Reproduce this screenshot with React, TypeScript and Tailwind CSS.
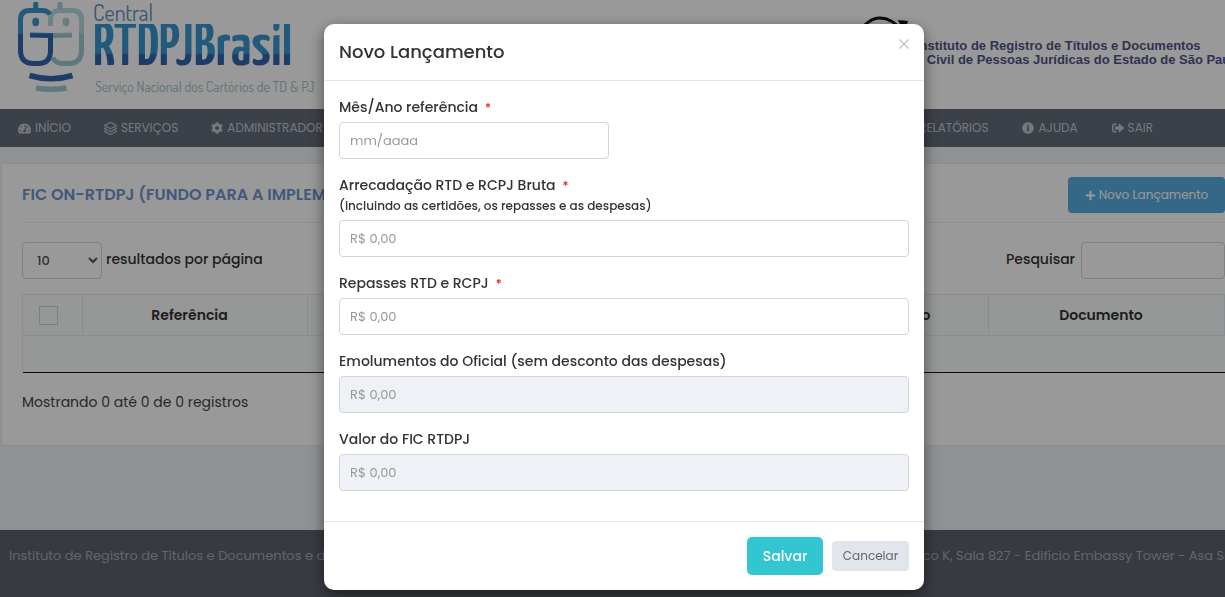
import type { ReactNode } from "react";
import { FaTachometerAlt, FaCog, FaInfoCircle, FaSignOutAlt, FaPlus, FaChartBar } from "react-icons/fa";
import { SlLayers } from "react-icons/sl";

function CentralLogo() {
  return (
    <svg viewBox="0 0 70 94" className="h-[94px] w-[70px] shrink-0" fill="none" aria-hidden="true">
      <defs>
        <linearGradient id="tone" gradientUnits="userSpaceOnUse" x1="0" y1="0" x2="0" y2="66">
          <stop offset="0.49" stopColor="#3a97d0" />
          <stop offset="0.53" stopColor="#2f65b0" />
        </linearGradient>
        <linearGradient id="pale" gradientUnits="userSpaceOnUse" x1="0" y1="0" x2="0" y2="66">
          <stop offset="0.49" stopColor="#b4dae2" />
          <stop offset="0.53" stopColor="#9fc8d1" />
        </linearGradient>
      </defs>
      <g stroke="url(#pale)" strokeWidth="5">
        <path d="M34.500 26v-6q0-9.500 9-9.500h13q9 0 9 9.500v30q0 13.500-13 13.500h-5q-8 0-11-6" />
        <path d="M37 35.500L56 35" />
      </g>
      <g stroke="url(#tone)" strokeWidth="5">
        <path d="M34 14.500q-2.500-4-8-4H13.500q-9 0-9 9.500v30q0 13.500 13 13.500h5q12 0 12-13.500V35.500L14 35" />
      </g>
      <rect x="17.200" y="2" width="5" height="8" rx="1" fill="#3a97d0" />
      <rect x="41.500" y="2" width="5" height="8" rx="1" fill="#a8d0da" />
      <ellipse cx="19.700" cy="22" rx="3.400" ry="4.200" fill="#3a97d0" />
      <ellipse cx="50" cy="22" rx="3.400" ry="4.200" fill="#a8d0da" />
      <path d="M13.500 75.500q21.500 6.500 43 0" stroke="#2f65b0" strokeWidth="5.500" />
      <path d="M20 88q15 2.500 30.500 0" stroke="#9fc8d1" strokeWidth="5.500" />
    </svg>
  );
}

function InstituteLogo() {
  return (
    <svg viewBox="0 0 60 60" className="h-[60px] w-[60px] shrink-0" fill="none" aria-hidden="true">
      <path d="M2 22Q12 6 24 6t22 13" stroke="#111" strokeWidth="3" />
      <path d="M42 8l10 1-4 12z" fill="#111" />
      <path d="M46 40Q36 55 24 55T4 42" stroke="#111" strokeWidth="3" />
    </svg>
  );
}

function NavItem({ icon, children }: { icon: ReactNode; children: ReactNode }) {
  return (
    <a href="#" className="flex items-center gap-1 whitespace-nowrap text-[12px] text-[#c4cacf]">
      {icon}
      {children}
    </a>
  );
}

type FieldProps = {
  id: string;
  label: string;
  hint?: string;
  placeholder: string;
  required?: boolean;
  disabled?: boolean;
  short?: boolean;
};

function Field({ id, label, hint, placeholder, required, disabled, short }: FieldProps) {
  return (
    <div className="mb-[15px]">
      <label htmlFor={id} className="mb-1 block pt-px text-[14px] leading-[21px] font-medium text-[#333]">
        {label}
        {required && <span className="ml-[7px] text-[12px] text-[#e02222]">*</span>}
        {hint && <span className="block text-[12px] leading-5">{hint}</span>}
      </label>
      <input
        id={id}
        type="text"
        placeholder={placeholder}
        disabled={disabled}
        className={
          "block h-[37px] rounded border border-[#d5d5d5] px-[10px] text-[13px] placeholder:text-[#999] " +
          (short ? "w-[270px] max-w-full " : "w-full ") +
          (disabled ? "bg-[#eef1f5]" : "bg-white")
        }
      />
    </div>
  );
}

const columns = [
  { name: "Referência", width: "w-[225px]" },
  { name: "Valor", width: "" },
  { name: "Situação", width: "" },
  { name: "Data Pagamento", width: "" },
  { name: "Documento", width: "w-[236px]" },
];

export default function App() {
  return (
    <div className="flex min-h-screen flex-col overflow-hidden bg-[#f0f2f7] font-['Poppins','Inter',sans-serif] text-[14px] text-[#333]">
      <header className="flex h-[109px] items-start justify-between bg-white pl-4">
        <div className="flex">
          <CentralLogo />
          <div className="pl-[7px] font-['Dosis','Liberation_Sans_Narrow',sans-serif] whitespace-nowrap">
            <div className="h-6 text-[22px] leading-6 text-[#648fbe]">Central</div>
            <div className="h-[50px] bg-linear-to-b from-[#3a97d0] from-58% to-[#2f65b0] to-62% bg-clip-text font-['Yanone_Kaffeesatz','Dosis',sans-serif] text-[60px] leading-[50px] font-semibold text-transparent">
              RTDPJBrasil
            </div>
            <div className="pl-[2px] pt-1 text-[14px] leading-[18px] text-[#9fc0ca]">
              Serviço Nacional dos Cartórios de TD &amp; PJ
            </div>
          </div>
        </div>
        <div className="flex w-[369px] shrink-0 pt-3">
          <InstituteLogo />
          <div className="pt-[27px] font-['Liberation_Sans',sans-serif] text-[13px] leading-[14px] font-bold whitespace-nowrap text-[#51548c]">
            <div>Instituto de Registro de Títulos e Documentos</div>
            <div>e Civil de Pessoas Jurídicas do Estado de São Paulo</div>
          </div>
        </div>
      </header>

      <nav className="flex h-[38px] shrink-0 items-center justify-between bg-[#646b78] pr-[72px] pl-[18px]">
        <div className="flex gap-[33px]">
          <NavItem icon={<FaTachometerAlt size={13} />}>INÍCIO</NavItem>
          <NavItem icon={<SlLayers size={13} strokeWidth={30} />}>SERVIÇOS</NavItem>
          <NavItem icon={<FaCog size={12} />}>ADMINISTRADOR</NavItem>
        </div>
        <div className="flex gap-[34px]">
          <NavItem icon={<FaChartBar size={12} />}>RELATÓRIOS</NavItem>
          <NavItem icon={<FaInfoCircle size={12} />}>AJUDA</NavItem>
          <NavItem icon={<FaSignOutAlt size={12} />}>SAIR</NavItem>
        </div>
      </nav>

      <main className="pt-4">
        <section className="-mr-px ml-px border border-[#e7ecf1] bg-white pb-[33px] pl-5">
          <div className="flex h-[59px] items-center justify-between border-b border-[#eee] pt-1">
            <h1 className="text-[16px] font-semibold whitespace-nowrap text-[#7094cf]">
              FIC ON-RTDPJ (FUNDO PARA A IMPLEMENTAÇÃO)
            </h1>
            <button
              type="button"
              className="flex h-9 w-[157px] items-center justify-center gap-[3px] rounded bg-[#57aee0] text-[12px] text-white"
            >
              <FaPlus size={11} />
              Novo Lançamento
            </button>
          </div>
          <div className="mt-[19px] flex items-center justify-between font-medium">
            <label className="flex items-center gap-1">
              <select className="h-[37px] w-20 rounded border border-[#d5d5d5] bg-white pl-[10px] text-[13px] text-[#555]">
                <option>10</option>
              </select>
              <span className="pb-[2px]">resultados por página</span>
            </label>
            <label className="flex items-center gap-[6px]">
              <span className="pb-[2px]">Pesquisar</span>
              <input type="search" className="h-[37px] w-[144px] rounded border border-[#d5d5d5] bg-white" />
            </label>
          </div>
          <table className="mt-[15px] w-full table-fixed border-collapse border-b border-[#111] bg-[#fafcfc]">
            <thead>
              <tr className="h-[41px]">
                <th className="w-[60px] border border-[#e7ecf1] pr-2">
                  <input
                    type="checkbox"
                    aria-label="Selecionar todos"
                    className="mx-auto block size-[19px] appearance-none border border-[#d0d5da]"
                  />
                </th>
                {columns.map(({ name, width }) => (
                  <th key={name} className={"border border-[#e7ecf1] pr-[11px] font-semibold " + width}>
                    {name}
                  </th>
                ))}
              </tr>
            </thead>
            <tbody>
              <tr className="h-[37px]">
                <td colSpan={6} className="border-l border-l-[#e7ecf1]" />
              </tr>
            </tbody>
          </table>
          <p className="mt-[19px] leading-5 text-[#444]">Mostrando 0 até 0 de 0 registros</p>
        </section>
      </main>

      <footer className="mt-[84px] flex flex-1 justify-between bg-[#5d626b] px-[9px] pt-4 text-[13px] leading-5 whitespace-nowrap text-[#a2abb7]">
        <span>Instituto de Registro de Títulos e Documentos e de</span>
        <span className="w-[313px] shrink-0">Bloco K, Sala 827 - Edifício Embassy Tower - Asa Sul</span>
      </footer>

      <div className="fixed inset-0 flex items-start justify-center overflow-hidden bg-black/40 pt-6 pl-[23px]">
        <div
          role="dialog"
          aria-modal="true"
          aria-labelledby="dialog-title"
          className="w-[600px] max-w-full rounded-[10px] bg-white shadow-[0_5px_15px_rgba(0,0,0,0.5)]"
        >
          <div className="flex h-[57px] items-start justify-between border-b border-[#e5e5e5] px-[15px]">
            <h2 id="dialog-title" className="pt-[15px] text-[18px] leading-[26px] font-medium">
              Novo Lançamento
            </h2>
            <button type="button" aria-label="Fechar" className="pt-[15px] text-[#c0c0c0]">
              <svg viewBox="0 0 10 10" className="size-[10px]" fill="none" stroke="currentColor" strokeWidth="1.200">
                <path d="M.5.5l9 9M9.500.5l-9 9" />
              </svg>
            </button>
          </div>
          <form className="px-[15px] pt-[15px] pb-[15px]">
            <Field id="mes" label="Mês/Ano referência" placeholder="mm/aaaa" required short />
            <Field
              id="arrecadacao"
              label="Arrecadação RTD e RCPJ Bruta"
              hint="(incluindo as certidões, os repasses e as despesas)"
              placeholder="R$ 0,00"
              required
            />
            <Field id="repasses" label="Repasses RTD e RCPJ" placeholder="R$ 0,00" required />
            <Field
              id="emolumentos"
              label="Emolumentos do Oficial (sem desconto das despesas)"
              placeholder="R$ 0,00"
              disabled
            />
            <Field id="valor" label="Valor do FIC RTDPJ" placeholder="R$ 0,00" disabled />
          </form>
          <div className="flex items-center justify-end gap-[9px] border-t border-[#e5e5e5] p-[15px]">
            <button type="button" className="h-[38px] w-[76px] rounded-[5px] bg-[#32c5d2] text-[14px] font-medium text-white">
              Salvar
            </button>
            <button type="button" className="h-[30px] w-[77px] rounded bg-[#e1e5ec] text-[12px] text-[#666]">
              Cancelar
            </button>
          </div>
        </div>
      </div>
    </div>
  );
}
